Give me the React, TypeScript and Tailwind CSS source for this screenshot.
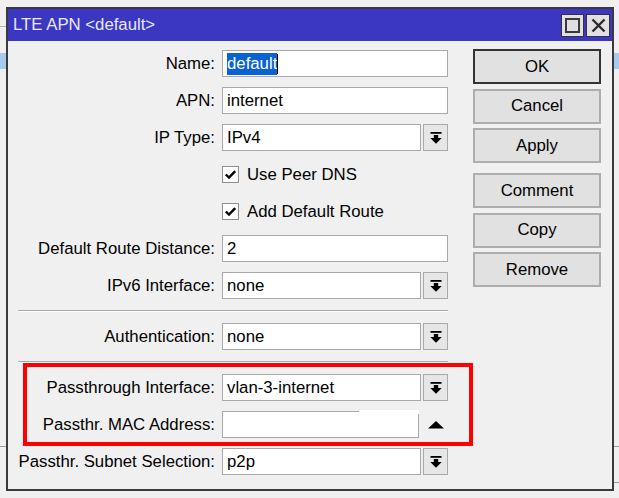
import React from 'react'

const font = "font-['Liberation_Sans',Arial,sans-serif]"

function DropIcon() {
  return (
    <svg width="12" height="12" viewBox="0 0 12 12">
      <rect x="0.5" y="0" width="11" height="1.8" fill="#000" />
      <rect x="3.8" y="3" width="4.4" height="3.5" fill="#000" />
      <polygon points="0.3,6 11.7,6 6,11.8" fill="#000" />
    </svg>
  )
}

function Label({ text }: { text: string }) {
  return (
    <div className="w-[197px] flex justify-end whitespace-nowrap text-black">{text}:</div>
  )
}

function TextRow({ label, value, selected }: { label: string; value: string; selected?: boolean }) {
  return (
    <div className="flex items-center h-[27px]">
      <Label text={label} />
      <div className="ml-[7px] h-[27px] w-[226px] border border-[#a9a9a9] bg-white flex items-center pl-[4px] text-black">
        {selected ? (
          <>
            <span className="bg-[#0b62d3] text-white leading-[22px]">{value}</span>
            <span className="w-px h-[20px] bg-black" />
          </>
        ) : (
          value
        )}
      </div>
    </div>
  )
}

function SelectRow({ label, value }: { label: string; value: string }) {
  return (
    <div className="flex items-center h-[27px]">
      <Label text={label} />
      <div className="ml-[7px] h-[27px] w-[199px] border border-[#a9a9a9] bg-white flex items-center pl-[4px] text-black">
        {value}
      </div>
      <div className="ml-[2px] h-[27px] w-[25px] border border-[#a9a9a9] bg-[#e6e6e6] flex items-center justify-center">
        <DropIcon />
      </div>
    </div>
  )
}

function CheckRow({ label }: { label: string }) {
  return (
    <div className="flex items-center h-[27px] pl-[204px]">
      <div className="w-[17px] h-[17px] border border-[#8f8f8f] bg-white flex items-center justify-center">
        <svg width="13" height="13" viewBox="0 0 13 13">
          <polyline points="1.8,6.5 5,9.6 11.2,3.2" fill="none" stroke="#000" strokeWidth="2.4" />
        </svg>
      </div>
      <span className="ml-[8px] text-black">{label}</span>
    </div>
  )
}

function Separator() {
  return (
    <div className="h-[24px] flex items-center">
      <div className="w-[430px] h-[2px] border-t border-[#a8a8a8] border-b border-b-white" />
    </div>
  )
}

function Btn({ text, primary }: { text: string; primary?: boolean }) {
  return (
    <div
      className={
        'w-[128px] h-[35px] border-2 bg-[#e1e1e1] flex items-center justify-center text-black ' +
        (primary ? 'border-[#333]' : 'border-[#adadad]')
      }
    >
      {text}
    </div>
  )
}

export default function App() {
  return (
    <div className={`relative w-[619px] h-[498px] overflow-hidden bg-[#f0f0f0] text-[16.75px] ${font}`}>
      {/* bits of the window behind */}
      <div className="absolute left-0 top-[26px] w-[6px] h-px bg-[#b4b4b4]" />
      <div className="absolute left-0 top-[53px] w-[6px] h-[16px] bg-[#a9c9ee]" />
      <div className="absolute right-0 top-[53px] w-[5px] h-[16px] bg-[#a9c9ee]" />
      <div className="absolute left-0 top-[446px] w-[6px] h-px bg-[#9a9a9a]" />
      <div className="absolute right-0 top-[446px] w-[5px] h-px bg-[#9a9a9a]" />
      <div className="absolute right-0 top-[482px] w-[5px] h-px bg-[#9a9a9a]" />

      <div className="ml-[6px] mt-[7px] w-[608px] h-[484px] border-2 border-[#3a3a3a] bg-[#f0f0f0] flex flex-col">
        {/* title bar */}
        <div className="h-[32px] bg-[#3b37c2] flex items-center pl-[5px] pr-[2px]">
          <span className="text-[#e8e8ff]">LTE APN &lt;default&gt;</span>
          <div className="ml-auto flex gap-[2px] mt-[1px]">
            <div className="w-[23px] h-[23px] border border-[#333] bg-[#e2dfe2] flex items-center justify-center">
              <svg width="15" height="15" viewBox="0 0 15 15">
                <rect x="1" y="1" width="13" height="13" fill="none" stroke="#3a3a3a" strokeWidth="2" />
              </svg>
            </div>
            <div className="w-[24px] h-[23px] border border-[#333] bg-[#e2dfe2] flex items-center justify-center">
              <svg width="15" height="15" viewBox="0 0 15 15">
                <path d="M1.5 1.5 L13.5 13.5 M13.5 1.5 L1.5 13.5" stroke="#2a2a2a" strokeWidth="2.4" />
              </svg>
            </div>
          </div>
        </div>

        {/* body */}
        <div className="flex pt-[9px] pl-[10px]">
          <div className="w-[430px] flex flex-col">
            <div className="flex flex-col gap-[10px]">
              <TextRow label="Name" value="default" selected />
              <TextRow label="APN" value="internet" />
              <SelectRow label="IP Type" value="IPv4" />
              <CheckRow label="Use Peer DNS" />
              <CheckRow label="Add Default Route" />
              <TextRow label="Default Route Distance" value="2" />
              <SelectRow label="IPv6 Interface" value="none" />
            </div>
            <Separator />
            <SelectRow label="Authentication" value="none" />
            <Separator />
            <div className="flex flex-col gap-[10px]">
              <SelectRow label="Passthrough Interface" value="vlan-3-internet" />
              <div className="flex items-center h-[27px]">
                <Label text="Passthr. MAC Address" />
                <div className="relative ml-[7px] h-[27px] w-[197px] border border-[#a9a9a9] bg-white">
                  <div className="absolute right-[-1px] top-[-2px] w-[60px] h-[4px] bg-white" />
                </div>
                <div className="ml-[4px] w-[25px] h-[27px] flex items-center justify-center">
                  <svg width="16" height="8" viewBox="0 0 16 8">
                    <polygon points="0,7.5 16,7.5 8,0" fill="#000" />
                  </svg>
                </div>
              </div>
              <SelectRow label="Passthr. Subnet Selection" value="p2p" />
            </div>
          </div>

          <div className="ml-[25px] -mt-[1px] flex flex-col gap-[4.5px]">
            <Btn text="OK" primary />
            <Btn text="Cancel" />
            <Btn text="Apply" />
            <div className="h-px" />
            <Btn text="Comment" />
            <Btn text="Copy" />
            <Btn text="Remove" />
          </div>
        </div>
      </div>

      {/* red highlight annotation */}
      <div className="absolute left-[23px] top-[363px] w-[450px] h-[83px] border-4 border-[#ff0000]" />
    </div>
  )
}
